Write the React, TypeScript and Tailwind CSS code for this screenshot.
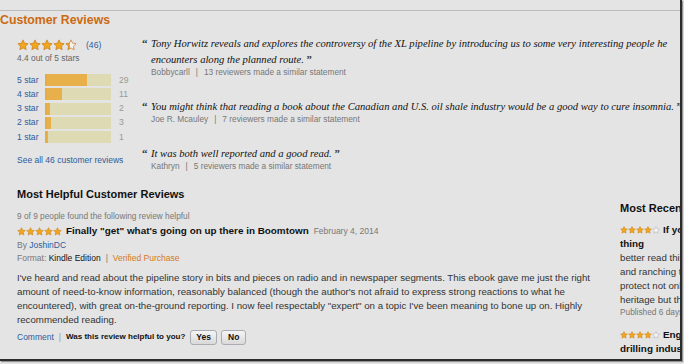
import React from "react";

const STAR = "M12 1.8l3.1 6.6 7.1.9-5.2 5 1.3 7.1L12 17.9l-6.3 3.5L7 14.3 1.8 9.3l7.1-.9L12 1.8z";

function Star({ size, fill, id }: { size: number; fill: number; id: string }) {
  return (
    <svg width={size} height={size} viewBox="0 0 24 24" className="shrink-0">
      <defs>
        <linearGradient id={id} x1="0" x2="1" y1="0" y2="0">
          <stop offset={fill} stopColor="#f3a51c" />
          <stop offset={fill} stopColor="#f4f4f4" />
        </linearGradient>
      </defs>
      <path d={STAR} fill={`url(#${id})`} stroke={fill > 0 ? "#c77a12" : "#a9a9a9"} strokeWidth="1.4" strokeLinejoin="round" />
    </svg>
  );
}

function Stars({ value, size, prefix }: { value: number; size: number; prefix: string }) {
  return (
    <span className="inline-flex items-center">
      {[0, 1, 2, 3, 4].map((i) => (
        <Star key={i} size={size} id={`${prefix}${i}`} fill={Math.max(0, Math.min(1, value - i))} />
      ))}
    </span>
  );
}

const histogram = [
  { label: "5 star", pct: 63, count: 29 },
  { label: "4 star", pct: 24, count: 11 },
  { label: "3 star", pct: 4, count: 2 },
  { label: "2 star", pct: 6.5, count: 3 },
  { label: "1 star", pct: 2, count: 1 },
];

const quotes = [
  {
    lines: [
      "Tony Horwitz reveals and explores the controversy of the XL pipeline by introducing us to some very interesting people he",
      "encounters along the planned route.",
    ],
    author: "Bobbycarll",
    similar: "13 reviewers made a similar statement",
    gap: "mt-0",
  },
  {
    lines: ["You might think that reading a book about the Canadian and U.S. oil shale industry would be a good way to cure insomnia."],
    author: "Joe R. Mcauley",
    similar: "7 reviewers made a similar statement",
    gap: "mt-[21px]",
  },
  {
    lines: ["It was both well reported and a good read."],
    author: "Kathryn",
    similar: "5 reviewers made a similar statement",
    gap: "mt-[21px]",
  },
];

const body = [
  "I've heard and read about the pipeline story in bits and pieces on radio and in newspaper segments. This ebook gave me just the right",
  "amount of need-to-know information, reasonably balanced (though the author's not afraid to express strong reactions to what he",
  "encountered), with great on-the-ground reporting. I now feel respectably \"expert\" on a topic I've been meaning to bone up on. Highly",
  "recommended reading.",
];

const recent = [
  "better read this book than argue about it",
  "and ranching that the pipeline would cross",
  "protect not only the water supply, but the",
  "heritage but that is not all",
];

export default function App() {
  return (
    <div className="w-[684px] h-[364px] bg-[#e4e4e4] font-['Liberation_Sans',Arial,sans-serif]">
      <div className="w-[682px] h-[361px] overflow-hidden border-r-2 border-b-2 border-[#2c2c2c] shadow-[1px_1px_1px_rgba(0,0,0,0.35)] pt-[10px]">
        <div className="border-t border-[#bdbdbd]">
          <h2 className="text-[12.3px] leading-[15px] font-bold text-[#cc6a12] mt-[2px]">Customer Reviews</h2>

          <div className="flex mt-[8px]">
            <div className="w-[142px] shrink-0 pl-[17px]">
              <div className="flex items-center h-[12px] mt-[3px]">
                <Stars value={4.4} size={12} prefix="big" />
                <span className="text-[8.6px] text-[#2d5c9c] ml-[9px]">(46)</span>
              </div>
              <div className="text-[8.4px] leading-[12px] text-[#666] mt-[1px]">4.4 out of 5 stars</div>

              <div className="mt-[10px] flex flex-col gap-[2.3px]">
                {histogram.map((h) => (
                  <div key={h.label} className="flex items-center h-[12px]">
                    <span className="w-[28px] text-[8.6px] text-[#2d5c9c]">{h.label}</span>
                    <div className="w-[66px] h-[12px] bg-[#dedab4] border-l-2 border-[#e4ac47]">
                      <div className="h-full bg-[#e8b04b]" style={{ width: `${h.pct}%` }} />
                    </div>
                    <span className="ml-[8px] text-[8.6px] text-[#999]">{h.count}</span>
                  </div>
                ))}
              </div>

              <div className="mt-[11px] text-[8.5px] leading-[12px] text-[#2d5c9c] whitespace-nowrap">See all 46 customer reviews</div>
            </div>

            <div className="flex-1">
              {quotes.map((q) => (
                <div key={q.author} className={`${q.gap} relative pl-[9px]`}>
                  <span className="absolute left-0 top-[-1px] font-['Liberation_Serif',serif] font-bold text-[11px] text-[#333]">“</span>
                  {q.lines.map((l, i) => (
                    <div key={i} className="whitespace-nowrap font-['Liberation_Serif',serif] italic text-[10.6px] leading-[16px] text-[#111]">
                      {l}
                      {i === q.lines.length - 1 ? <span className="not-italic font-bold text-[#333]"> ”</span> : null}
                    </div>
                  ))}
                  <div className="-mt-[2px] text-[8.3px] leading-[12px] text-[#777] whitespace-nowrap">
                    {q.author}
                    <span className="mx-[6px]">|</span>
                    {q.similar}
                  </div>
                </div>
              ))}
            </div>
          </div>

          <div className="flex mt-[15px]">
            <div className="w-[620px] shrink-0 pl-[17px]">
              <h3 className="text-[11px] leading-[14px] font-bold text-[#111]">Most Helpful Customer Reviews</h3>
              <div className="mt-[10px] text-[8.3px] leading-[10px] text-[#777]">9 of 9 people found the following review helpful</div>
              <div className="flex items-center h-[14px] mt-[3px]">
                <Stars value={5} size={9} prefix="rv" />
                <span className="text-[9.9px] font-bold text-[#111] ml-[4px]">Finally "get" what's going on up there in Boomtown</span>
                <span className="text-[8.5px] text-[#777] ml-[5px]">February 4, 2014</span>
              </div>
              <div className="text-[8.5px] leading-[14px] text-[#777]">
                By <span className="text-[#2d5c9c]">JoshinDC</span>
              </div>
              <div className="text-[8.5px] leading-[13px] text-[#777]">
                Format: <span className="text-[#111]">Kindle Edition</span>
                <span className="mx-[5px]">|</span>
                <span className="text-[#d27a1c]">Verified Purchase</span>
              </div>
              <div className="mt-[6px]">
                {body.map((l, i) => (
                  <div key={i} className="whitespace-nowrap text-[9.7px] leading-[14px] text-[#333]">{l}</div>
                ))}
              </div>
              <div className="flex items-center h-[16px] mt-[2px] text-[8.5px]">
                <span className="text-[#2d5c9c]">Comment</span>
                <span className="mx-[5px] text-[#999]">|</span>
                <span className="font-bold text-[8px] text-[#111]">Was this review helpful to you?</span>
                <span className="ml-[5px] px-[5px] h-[15px] leading-[13px] border border-[#a9acb0] rounded-[3px] bg-gradient-to-b from-[#f5f5f5] to-[#d9d9d9] font-bold text-[#111]">Yes</span>
                <span className="ml-[4px] px-[6px] h-[15px] leading-[13px] border border-[#a9acb0] rounded-[3px] bg-gradient-to-b from-[#f5f5f5] to-[#d9d9d9] font-bold text-[#111]">No</span>
              </div>
            </div>

            <div className="w-[200px] shrink-0 pt-[14px]">
              <h3 className="text-[11px] leading-[14px] font-bold text-[#111] whitespace-nowrap">Most Recent Customer Reviews</h3>
              <div className="flex items-center h-[14px] mt-[8px] whitespace-nowrap">
                <Stars value={4} size={8} prefix="r1" />
                <span className="text-[9.9px] font-bold text-[#111] ml-[3px]">If you care about the land, read this</span>
              </div>
              <div className="text-[9.9px] font-bold text-[#111] leading-[14px]">thing</div>
              {recent.map((l) => (
                <div key={l} className="whitespace-nowrap text-[9.7px] leading-[14px] text-[#333]">{l}</div>
              ))}
              <div className="text-[8.3px] leading-[10px] text-[#777] whitespace-nowrap">Published 6 days ago by Reader</div>
              <div className="flex items-center h-[14px] mt-[11px] whitespace-nowrap">
                <Stars value={4} size={8} prefix="r2" />
                <span className="text-[9.9px] font-bold text-[#111] ml-[3px]">Engaging look at the oil and</span>
              </div>
              <div className="text-[9.9px] font-bold text-[#111] leading-[14px] whitespace-nowrap">drilling industry</div>
            </div>
          </div>
        </div>
      </div>
    </div>
  );
}
